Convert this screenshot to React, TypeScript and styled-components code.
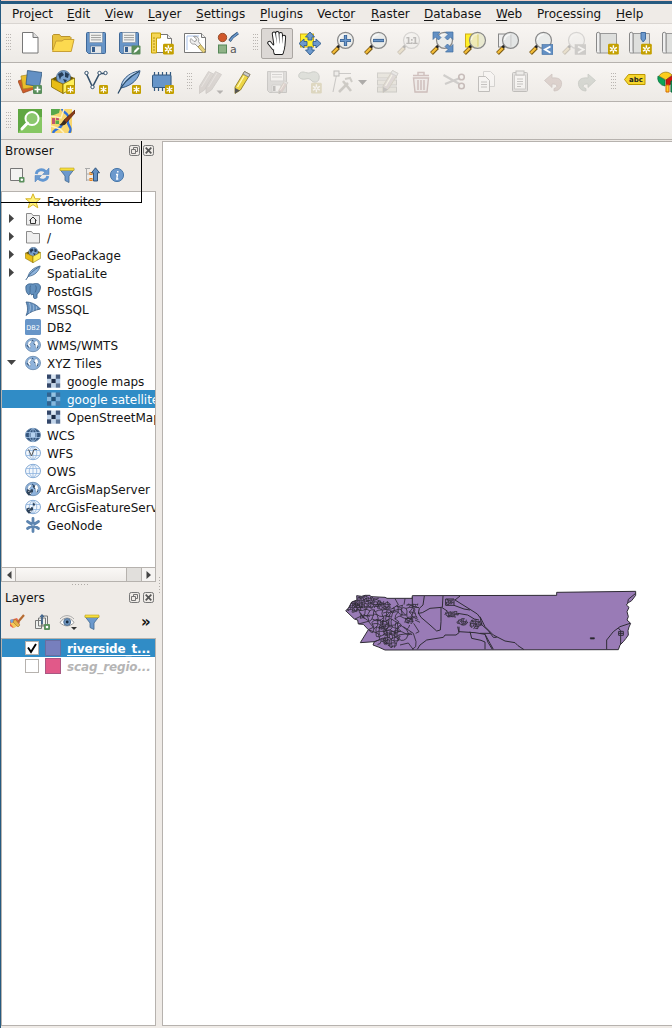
import React from "react";
import styled, { createGlobalStyle } from "styled-components";

const Global = createGlobalStyle`
  * { box-sizing: border-box; }
  body { margin: 0; overflow: hidden; background: #efebe7; }
  svg { display: block; flex: none; }
`;

const Window = styled.div`
  position: relative;
  display: flex;
  flex-direction: column;
  width: 672px;
  height: 1028px;
  overflow: hidden;
  border-left: 1px solid #265a80;
  background: #efebe7;
  color: #141414;
  font: 12px/18px "DejaVu Sans", sans-serif;
`;

const WindowEdge = styled.div`
  flex: none;
  height: 4px;
  border-top: 1px solid #f3cfc5;
  background: #265a80;
`;

const MenuBar = styled.nav`
  display: flex;
  flex: none;
  height: 20px;
  padding-left: 11px;
  border-bottom: 1px solid #d9d5d1;
`;

const MenuItem = styled.span<{ $w: number }>`
  flex: none;
  width: ${(p) => p.$w}px;
  line-height: 21px;
  white-space: nowrap;
  u { text-decoration-thickness: 1px; text-underline-offset: 2px; text-decoration-skip-ink: none; }
`;

const ToolBar = styled.div<{ $h: number }>`
  display: flex;
  flex: none;
  align-items: center;
  height: ${(p) => p.$h}px;
  border-bottom: 1px solid #b6b2ae;
  background: linear-gradient(#f8f5f2, #edeae6);
`;

const Grip = styled.span<{ $first?: boolean }>`
  flex: none;
  width: ${(p) => (p.$first ? 13 : 16)}px;
  height: 18px;
  padding-left: ${(p) => (p.$first ? 5 : 8)}px;
  &::before {
    content: "";
    display: block;
    width: 5px;
    height: 17px;
    background: radial-gradient(circle at 0.5px 0.5px, #b9b5b1 0.7px, transparent 0.8px) 0 0 / 2px 3px;
  }
`;

const Tool = styled.span<{ $on?: boolean; $off?: boolean; $w?: number }>`
  display: flex;
  flex: none;
  align-items: center;
  gap: 3px;
  width: ${(p) => p.$w ?? 33}px;
  height: 31px;
  padding-left: 4px;
  & > svg { opacity: ${(p) => (p.$off ? 0.28 : 1)}; filter: ${(p) => (p.$off ? "saturate(.45)" : "none")}; }
  ${(p) =>
    p.$on &&
    `width: 32px; margin-right: 1px; border: 1px solid #aaa6a2; border-radius: 2px; background: #dcd8d5; padding-left: 3px;`}
`;

const Body = styled.div`
  display: flex;
  flex: 1;
  min-height: 0;
`;

const Docks = styled.aside`
  display: flex;
  flex: none;
  flex-direction: column;
  width: 155px;
  padding-bottom: 2px;
`;

const DockTitle = styled.div`
  display: flex;
  flex: none;
  align-items: center;
  gap: 3px;
  height: 21px;
  padding: 0 2px 0 4px;
  span { flex: 1; }
`;

const DockTools = styled.div`
  display: flex;
  flex: none;
  align-items: center;
  gap: 9px;
  height: 30px;
  padding: 0 0 2px 8px;
`;

const More = styled.b`
  margin-left: 32px;
  font-size: 15px;
  line-height: 14px;
`;

const TreeBox = styled.div<{ $h?: number }>`
  display: flex;
  flex: ${(p) => (p.$h ? "none" : "1")};
  flex-direction: column;
  height: ${(p) => (p.$h ? `${p.$h}px` : "auto")};
  border: 1px solid #b6b2ae;
  background: #fff;
  overflow: hidden;
`;

const TreeRow = styled.div<{ $sel?: boolean; $child?: boolean }>`
  display: flex;
  flex: none;
  align-items: center;
  height: 18px;
  padding-left: ${(p) => (p.$child ? 25 : 3)}px;
  background: ${(p) => (p.$sel ? "#308cc6" : "transparent")};
  color: ${(p) => (p.$sel ? "#fff" : "inherit")};
  white-space: nowrap;
  & > span { flex: none; margin: 2px 0 0 6px; }
`;

const Twisty = styled.i`
  flex: none;
  width: 20px;
  height: 18px;
  svg { margin-top: 4px; }
`;

const ScrollBar = styled.div`
  display: flex;
  height: 14px;
  margin-top: auto;
  border-top: 1px solid #b6b2ae;
  background: #e1dfdc;
`;

const ScrollEnd = styled.span<{ $right?: boolean }>`
  display: flex;
  align-items: center;
  justify-content: center;
  width: 14px;
  margin-left: ${(p) => (p.$right ? "auto" : "0")};
  border: solid #b6b2ae;
  border-width: ${(p) => (p.$right ? "0 0 0 1px" : "0 1px 0 0")};
  background: #f6f4f2;
`;

const ScrollThumb = styled.span`
  width: 111px;
  border-right: 1px solid #b6b2ae;
  background: linear-gradient(#faf8f6, #efece9);
`;

const Splitter = styled.div`
  flex: none;
  height: 5px;
  padding: 2px 0 0 71px;
  &::before {
    content: "";
    display: block;
    width: 17px;
    height: 1px;
    background: repeating-linear-gradient(90deg, #b0aca8 0 1px, transparent 1px 3px);
  }
`;

const VSplitter = styled.div`
  flex: none;
  width: 6px;
  padding: 437px 0 0 3px;
  &::before {
    content: "";
    display: block;
    width: 1px;
    height: 17px;
    background: repeating-linear-gradient(#b0aca8 0 1px, transparent 1px 3px);
  }
`;

const LayerRow = styled.div<{ $sel?: boolean }>`
  display: flex;
  flex: none;
  align-items: center;
  height: 18px;
  padding-left: 23px;
  background: ${(p) => (p.$sel ? "#308cc6" : "transparent")};
  color: ${(p) => (p.$sel ? "#fff" : "#b5b5b5")};
  font-weight: bold;
  font-style: ${(p) => (p.$sel ? "normal" : "italic")};
  letter-spacing: -0.15px;
  white-space: nowrap;
  span {
    margin-top: 2px;
    text-decoration: ${(p) => (p.$sel ? "underline" : "none")};
    text-underline-offset: 2px;
    text-decoration-thickness: 1px;
    text-decoration-skip-ink: none;
  }
`;

const Check = styled.i`
  flex: none;
  width: 14px;
  height: 14px;
  border: 1px solid #b6b2ae;
  background: #fff;
`;

const Swatch = styled.i<{ $c: string }>`
  flex: none;
  width: 16px;
  height: 16px;
  margin: 0 6px;
  border: 1px solid #55557766;
  background: ${(p) => p.$c};
`;

const Canvas = styled.main`
  flex: 1;
  min-width: 0;
  margin: 1px 0 2px;
  padding: 438px 0 0 172px;
  border: solid #b6b2ae;
  border-width: 1px 0 1px 1px;
  background: #fff;
`;

const OutlineMark = styled.div`
  position: absolute;
  left: 0;
  top: 141px;
  width: 141px;
  height: 62px;
  border: solid #000;
  border-width: 0 1px 1px 0;
`;

type Kids = { children: React.ReactNode };
const I24 = ({ children }: Kids) => (
  <svg width="24" height="24" viewBox="0 0 24 24" fill="none">{children}</svg>
);
const I16 = ({ children }: Kids) => (
  <svg width="16" height="16" viewBox="0 0 16 16" fill="none">{children}</svg>
);

const NewBadge = ({ big }: { big?: boolean }) => (
  <g transform={big ? "translate(13 12.8) scale(1.2)" : "translate(15 15)"}>
    <rect width="9" height="9" rx="1.2" fill="#c4a000" />
    <path d="M4.5 1.2v6.6M1.6 2.9l5.800 3.300M7.400 2.900L1.600 6.200" stroke="#fff" strokeWidth="1.200" />
    {big && <circle cx="4.500" cy="4.500" r="1" fill="#c4a000" stroke="#fff" strokeWidth=".7" />}
  </g>
);

const Floppy = () => (
  <>
    <path d="M3.5 1.5h17a1 1 0 0 1 1 1v19a1 1 0 0 1-1 1H4.500l-2-2v-18a1 1 0 0 1 1-1z" fill="#6795c8" stroke="#3f6898" />
    <rect x="5.500" y="1.500" width="13" height="10" fill="#f2f3f1" stroke="#8090a2" strokeWidth=".6" />
    <path d="M7 4.300h10M7 6.600h10M7 8.900h10" stroke="#9b9d9c" />
    <rect x="6.500" y="15" width="11" height="7.300" fill="#e5e7e8" stroke="#55779d" strokeWidth=".7" />
    <rect x="8" y="16" width="3" height="5" fill="#355d8c" />
  </>
);

const NewProject = () => (
  <I24><path d="M4.500 1.500h10.500l5 5v15.500H4.500z" fill="#fff" stroke="#777" /><path d="M15 1.500v5h5" fill="#ddd" stroke="#777" /></I24>
);
const OpenProject = () => (
  <I24>
    <path d="M1.500 19V4.500l1-1h6l1.500 2H19l1 1V10" fill="#e8c23f" stroke="#b9932e" />
    <path d="M1.500 20.500L5 10h6l2-1.500h10l-2.800 12z" fill="#fcd94f" stroke="#c9a034" />
  </I24>
);
const Save = () => <I24><Floppy /></I24>;
const SaveAs = () => (
  <I24><Floppy /><rect x="14.500" y="14.500" width="9" height="9" rx="1" fill="#5a8c5a" /><path d="M16.500 22l1-2.500 3.500-3.500 1.500 1.500-3.500 3.500z" fill="#fff" /></I24>
);
const NewLayout = () => (
  <I24>
    <path d="M2.500 3.500h15l4 4v14h-19z" fill="#fff" stroke="#777" /><path d="M17.500 3.500v4h4" stroke="#777" fill="#eee" />
    <path d="M1.500 2h9v5h-4v15h-5z" fill="#f5d657" stroke="#c4a000" /><path d="M3 7h2M3 10h2M3 13h2M3 16h2M3 19h2" stroke="#9c7e10" strokeWidth=".8" />
    <NewBadge big />
  </I24>
);
const LayoutManager = () => (
  <I24>
    <path d="M1.500 2.500h17l4 4v15h-21z" fill="#fff" stroke="#777" /><path d="M18.500 2.500v4h4" stroke="#777" fill="#eee" />
    <path d="M4 19V5h12" stroke="#a9c1ea" />
    <path d="M8 7.500l3 3 2-.5.500-2-3-2.500c4-1 6 2 5 5l2 3-2.500 2.500-3-3c-4 1-6-3-4-5.500z" fill="#eee" stroke="#888" strokeWidth=".8" />
    <path d="M15 16l2.500-2.500 5 6-2 2.500z" fill="#e6d27c" stroke="#9e8a45" strokeWidth=".8" />
  </I24>
);
const StyleManager = () => (
  <I24>
    <circle cx="6.500" cy="6.500" r="4.200" fill="#d1582b" stroke="#96502e" /><path d="M13.500 10l3-4L22 2" stroke="#34597f" strokeWidth="3" /><path d="M14 9.500l2.500-3L22 2" stroke="#6f9cd1" strokeWidth="1.400" />
    <rect x="2.500" y="14" width="8" height="8" fill="#8fb287" stroke="#568858" />
    <text x="14" y="21.500" fontSize="11" fontFamily="DejaVu Sans" fill="#555">a</text>
  </I24>
);

const PanHand = () => {
  const fingers = "M9 2.800L10.700 14M12.300 2.300L13.200 14M15.700 3.200L15.800 14M18.900 6L18.200 15M4.500 12L8.500 17";
  const palm = "M8.500 15l2-2h8l.200 4-1.500 5.500H10z";
  return (
    <I24>
      <g stroke="#1a1a1a" strokeWidth="4.400" strokeLinecap="round"><path d={fingers} /></g>
      <path d={palm} fill="#1a1a1a" stroke="#1a1a1a" strokeWidth="2.800" strokeLinejoin="round" />
      <g stroke="#fff" strokeWidth="2.500" strokeLinecap="round"><path d={fingers} /></g>
      <path d={palm} fill="#fff" stroke="#fff" strokeLinejoin="round" />
    </I24>
  );
};
const PanSelection = () => (
  <I24>
    <rect x="2.500" y="3" width="13" height="13" fill="#fff029" stroke="#d0ab17" />
    <path d="M12 1l4.500 5h-2.500v3h-4V6H7.500zM12 24l4.500-5h-2.500v-3h-4v3H7.500zM1 12.500L6 8v2.500h3v4H6V17zM23 12.500L18 8v2.500h-3v4h3V17z" fill="#6c99cd" stroke="#315d8d" strokeWidth=".9" />
  </I24>
);

const Lens = ({ tint = "#e9ebea", children }: { tint?: string; children?: React.ReactNode }) => (
  <>
    <path d="M1.500 22.500l6-6" stroke="#7c5a15" strokeWidth="4" /><path d="M1.800 22l5-5" stroke="#f4bd38" strokeWidth="2.400" />
    <path d="M6.500 16.500l2.500-2.500" stroke="#222" strokeWidth="2.800" />
    <circle cx="14.500" cy="9.300" r="8" fill={tint} fillOpacity=".9" stroke="#888" strokeWidth="1.200" />
    <path d="M8.500 9a6 6 0 0 1 6-5.500" stroke="#fff" strokeWidth="1.500" opacity=".7" />
    {children}
  </>
);
const ZoomIn = () => <I24><Lens><path d="M14.500 4v11M9 9.500h11" stroke="#38608f" strokeWidth="3.200" /><path d="M14.500 4.500v10M9.500 9.500h10" stroke="#6c99cd" strokeWidth="1.500" /></Lens></I24>;
const ZoomOut = () => <I24><Lens><path d="M9 9.500h11" stroke="#38608f" strokeWidth="3.200" /><path d="M9.500 9.500h10" stroke="#6c99cd" strokeWidth="1.500" /></Lens></I24>;
const ZoomNative = () => <I24><Lens><text x="8.200" y="13" fontSize="9" fontWeight="bold" fontFamily="DejaVu Sans" textLength="13" fill="#333">1:1</text></Lens></I24>;
const ZoomFull = () => (
  <I24><Lens /><path d="M3 1h7L8 3.500l3 3L8.500 9l-3-3L3 8.500zM23 1v7.500L20.500 6l-3 3L15 6.500l3-3L15.500 1zM23 21v-7.500L20.500 16l-3-3-2.500 2.500 3 3-2.500 2.500z" fill="#6390c4" stroke="#416d9f" strokeWidth=".7" /></I24>
);
const ZoomSelection = () => <I24><rect x="2.500" y="3" width="12" height="13" fill="#fff029" stroke="#d0ab17" /><Lens tint="#e8e8cd"><path d="M9.500 4.500L15 3v13l-6-3z" fill="#f3ebb0" opacity=".6" /><path d="M15 3.500v12" stroke="#d8ce6b" /></Lens></I24>;
const ZoomLayer = () => <I24><rect x="2.500" y="3" width="12" height="13" fill="#eee" stroke="#888" /><Lens tint="#e2e4e4"><path d="M15 3.500v12" stroke="#ccc" /></Lens></I24>;
const ZoomStep = ({ next }: { next?: boolean }) => (
  <I24><Lens /><rect x="13" y="13.500" width="11" height="10" fill={next ? "#777" : "#6390c4"} stroke={next ? "#777" : "#416d9f"} strokeWidth=".6" /><path d={next ? "M16 15.500l5.500 3-5.500 3.200" : "M21.500 15.500l-5.500 3 5.500 3.200"} stroke="#fff" strokeWidth="1.900" /></I24>
);
const MapView = ({ mark }: { mark?: boolean }) => (
  <I24>
    <path d="M5 2.500h16.500V22H5z" fill="#dedfdd" stroke="#999" /><path d="M5 22H3.500a1.500 1.500 0 0 1-2-1.500V3a1.500 1.500 0 0 1 3.500 0v16c0 2 1 3 0 3z" fill="#efefef" stroke="#888" />
    {mark && <path d="M13 1.500h4.500V8l-2.300 3L13 8z" fill="#6c99cd" stroke="#416d9f" />}
    <NewBadge big />
  </I24>
);

const DataSource = () => (
  <I24>
    <path d="M0 11l11-4 5 12-11 4z" fill="#ce5c2b" stroke="#964519" strokeWidth=".7" /><path d="M3 6l12-2 2 13-12 2z" fill="#e9bd2c" stroke="#a8861c" strokeWidth=".7" /><path d="M9.500.500l14.500 2-2.500 14-13.500-2z" fill="#6390c4" stroke="#34597f" strokeWidth=".8" />
    <rect x="15" y="15" width="9" height="9" rx="1.200" fill="#5a8f5c" /><path d="M19.500 16.500v6M16.500 19.500h6" stroke="#fff" strokeWidth="1.600" />
  </I24>
);
const Box3d = () => (
  <>
    <path d="M.500 9L12 13.500 23.500 8 12 3z" fill="#6b5600" /><circle cx="12.500" cy="7.500" r="7" fill="#7aa2ce" stroke="#3d5c80" strokeWidth=".7" />
    <path d="M7 4l4-2 2 3-3 2-1 3zM14 2l4 2-1 4-3-1zM12 9l4 1-2 3z" fill="#253c58" />
    <path d="M.500 9l11.500 5v9.500L.500 17z" fill="#e9bd17" stroke="#806700" strokeWidth=".8" /><path d="M23.500 8L12 14v9.500L23.500 17z" fill="#fff05b" stroke="#806700" strokeWidth=".8" />
  </>
);
const NewGeoPackage = () => <I24><Box3d /><NewBadge /></I24>;
const NewShape = () => <I24><path d="M2.500 4l6 13 7-13.500h6" stroke="#34506b" strokeWidth="1.600" /><g fill="#fff" stroke="#34506b"><circle cx="2.500" cy="3" r="1.700" /><circle cx="8.500" cy="17" r="1.700" /><circle cx="15.500" cy="3" r="1.700" /><circle cx="21.500" cy="3" r="1.700" /></g><NewBadge /></I24>;
const NewSpatialite = () => (
  <I24>
    <path d="M4 18C4 11 10 3 23 .700 22 8 16 15.500 4 18z" fill="#7da6d4" stroke="#365b85" />
    <path d="M6 14C9 7 14 4 21 2" stroke="#c6daee" strokeWidth="1.300" />
    <path d="M1 23.500C5 14 11 7.500 22 1.500" stroke="#274866" strokeWidth="1.200" />
    <NewBadge />
  </I24>
);
const NewMemory = () => (
  <I24><path d="M5 2v19M9 2v19M13 2v19M17 2v19M21 2v12" transform="translate(-.5 0)" stroke="#34597f" strokeWidth="1.200" /><rect x="2.500" y="5" width="18.500" height="12.500" rx="1" fill="#6795c8" stroke="#34597f" /><NewBadge /></I24>
);
const PencilShape = ({ fill = "#edd545" }: { fill?: string }) => (
  <>
    <path d="M3 17L12.500 1.500l5.500 3L8.500 20 3 23.500z" fill={fill} stroke="#8d7c2c" strokeWidth=".9" />
    <path d="M12.500 1.500l5.500 3-1.500 2.500-5.500-3z" fill="#ccc" stroke="#777" strokeWidth=".8" />
    <path d="M5.500 17L12 6" stroke="#fff9b5" strokeWidth="1.300" />
    <path d="M3 18l5 2.500L3 23.500z" fill="#555" />
  </>
);
const GreyPencil = () => (
  <><path d="M3 17L12.500 1.500l6 3L8.500 20 3 23.500z" fill="#a68f86" stroke="#80706a" strokeWidth=".9" /><path d="M5.500 17L14 3" stroke="#cdbfb9" /></>
);
const CurrentEdits = () => <I24><g transform="translate(-3 0)"><GreyPencil /></g><g transform="translate(4 0)"><GreyPencil /></g><path d="M17.500 20.500h7l-3.500 3.500z" fill="#222" /></I24>;
const ToggleEdit = () => <I24><PencilShape /></I24>;
const SaveEdits = () => (
  <I24><path d="M2.500 1.500h19v21h-17l-2-2z" fill="#aaa" stroke="#666" /><path d="M5.500 2h13v9h-13zM7 15h9v7H7z" fill="#f4f4f4" stroke="#888" /><path d="M7 4.500h10M7 7h10" stroke="#888" /><path d="M8 16h2.500v5H8z" fill="#444" /><g transform="translate(12 10) scale(.6)"><PencilShape fill="#c77" /></g></I24>
);
const AddPolygon = () => <I24><path d="M2 3c4-3 7 2 12-1 5-1 8 2 7 7-1 4-6 4-8 1-3-3-5 0-9-1C0 8 0 5 2 3z" fill="#9bb8a0" stroke="#56705c" /><NewBadge big /></I24>;
const VertexTool = () => <I24><path d="M2 22L5.500 5M6 3.500h14" stroke="#666" strokeWidth="1.100" /><rect x="3" y="1" width="5" height="5" fill="#ddd" stroke="#333" /><path d="M8 22l9-9M12 11l8 10" stroke="#75705c" strokeWidth="2.600" /><path d="M14 9l5-1 2 4" stroke="#75705c" strokeWidth="2" /></I24>;
const ModifyAttrs = () => <I24><g fill="#d0c9a5" stroke="#776"><rect x="1.500" y="3" width="19" height="5" /><rect x="1.500" y="10" width="19" height="5" /><rect x="1.500" y="17" width="19" height="5" /></g><g transform="translate(4 -1)"><PencilShape fill="#b99" /></g></I24>;
const Trash = () => <I24><path d="M4.500 8h15l-1.500 14H6z" fill="#edd" stroke="#a03a3a" strokeWidth="1.400" /><path d="M4 5.500h16M9 5V2.500h6V5M9 10v10M12 10v10M15 10v10" stroke="#a03a3a" strokeWidth="1.500" /></I24>;
const Cut = () => <I24><path d="M1.500 5l16 9M3 14l15-6" stroke="#777" strokeWidth="2.200" /><circle cx="19.500" cy="7" r="2.800" stroke="#733" strokeWidth="1.600" /><circle cx="19.500" cy="16" r="2.800" stroke="#733" strokeWidth="1.600" /></I24>;
const Copy = () => <I24><path d="M8.500 1.500h7l4 4v11h-11z" fill="#fff" stroke="#888" /><path d="M3.500 6.500h7l4 4v11h-11z" fill="#fff" stroke="#444" /><path d="M6 12h6M6 14.500h6M6 17h6" stroke="#555" /></I24>;
const Paste = () => <I24><rect x="4.500" y="2.500" width="15" height="19" rx="1" fill="#bbb" stroke="#444" /><path d="M6.500 5h11v14h-11z" fill="#fff" stroke="#777" /><rect x="8" y="1" width="8" height="4" fill="#ddd" stroke="#444" /><path d="M9 9h6M9 11.500h6M9 14h6M9 16.500h4" stroke="#555" /></I24>;
const Undo = () => <I24><path d="M3.500 10.500L11 4v4c8-1 11 3 9 8.500-1 3-4 4.500-7 4.500v-2.500c4-1 4-5-2-4.500v3.500z" fill="#c2806f" stroke="#8c5144" strokeWidth=".8" /></I24>;
const Redo = () => <I24><path d="M21.500 10.500L14 4v4C6 7 3 11 5 16.500c1 3 4 4.500 7 4.500v-2.500c-4-1-4-5 2-4.500v3.500z" fill="#819d86" stroke="#526e57" strokeWidth=".8" /></I24>;
const LabelTool = () => <I24><path d="M1.500 9.500l4-5h16.500v10H5.500z" fill="#f5d62e" stroke="#bd9700" /><text x="6" y="12" fontSize="7" fontWeight="bold" fontFamily="DejaVu Sans" textLength="14" fill="#222">abc</text></I24>;
const DiagramTool = () => <I24><path d="M10 10L3 6a8 8 0 0 1 13-1z" fill="#fcce1d" stroke="#866600" strokeWidth=".6" /><path d="M9 10L2 6a8 8 0 0 0 7 10z" fill="#0ba458" stroke="#075f32" strokeWidth=".6" /><path d="M10 10l7-5a8 8 0 0 1-7 11z" fill="#cc1610" stroke="#711" strokeWidth=".6" /><path d="M10 15h3v7h-3z" fill="#ffd02a" stroke="#d66a00" /><path d="M15 11h4v11h-4z" fill="#1cab65" stroke="#075f32" /></I24>;

const SearchPlugin = () => (
  <I24><rect width="24" height="24" fill="#86c763" /><path d="M0 0h24v8C14 8 6 14 0 24z" fill="#4f9a35" opacity=".7" /><circle cx="14" cy="9.500" r="6.500" stroke="#fff" strokeWidth="2" fill="#8bc76f" /><path d="M9.500 14L4 19.800" stroke="#fff" strokeWidth="3" strokeLinecap="round" /></I24>
);
const StreetMapPlugin = () => (
  <I24>
    <rect width="21" height="24" fill="#f9d66e" /><path d="M0 0h9l-1 4-8 3z" fill="#58a84b" /><path d="M1 9h3v6H1zM5 8h3v3H5z" fill="#c4546e" /><path d="M4.500 11.500H8V15H4.500z" fill="#58a84b" />
    <path d="M11 0c1 4 8 4 6 11-2 5 6 8 1 13M2 24c2-6 8-3 9-9" stroke="#2f71dc" strokeWidth="2.400" /><path d="M0 17l9 3 4 4M13 0l-3 9-10-2" stroke="#fff1c0" strokeWidth="1.500" />
    <path d="M24 1L13 11l2.500 2.500L24 4z" fill="#8d3c16" stroke="#4f1f0b" strokeWidth=".7" /><path d="M13 11c-2 1.500-2 4-5 5 3 1 7 .5 7.500-2.500z" fill="#3b2a1c" />
  </I24>
);

/* ---- 16px icons ---- */
const AddLayer = () => <I16><path d="M1.500 1.500h12v12h-12z" fill="#f3f3f1" stroke="#777" /><rect x="10" y="10" width="5.500" height="5.500" rx="1" fill="#5a8f5c" /><circle cx="12.800" cy="12.800" r="1.300" fill="#fff" /></I16>;
const Refresh = () => (
  <I16>
    <path d="M2.200 7C3 2.500 8.500 1.500 11.500 4.500M13.800 9C13 13.500 7.500 14.500 4.500 11.500" stroke="#6297d2" strokeWidth="2.800" />
    <path d="M15 1v6.500H8.500zM1 15V8.500h6.500z" fill="#6c9bd1" stroke="#4a7fb8" strokeWidth=".5" />
  </I16>
);
const Filter = () => <I16><path d="M1 2.500h14L10 9v6.500l-4-2V9z" fill="#6c99cd" stroke="#41688f" strokeWidth=".8" /><path d="M1 1h14v2.500H1z" fill="#f6df3e" stroke="#bda31e" strokeWidth=".6" /></I16>;
const Collapse = () => <I16><path d="M1 1.500h5M2.500 1v13M2.500 7h3M2.500 13h3" stroke="#aaa" /><path d="M6 5.500h2v2H6zM6 11.500h2v2H6z" fill="#fff" stroke="#e48523" strokeWidth="1.200" /><path d="M11.500.800l4 5H13.500V14h-4V5.800h-2z" fill="#6390c4" stroke="#274a73" strokeWidth=".9" /></I16>;
const Info = () => <I16><circle cx="8" cy="8" r="6.600" fill="#6c99cd" stroke="#4a79aa" /><path d="M8.800 4v1.600M7 7.500h1.500L7.800 12h1.500" stroke="#fff" strokeWidth="1.400" /></I16>;
const Star = () => <I16><path d="M8 .800l2.100 5h5.200l-4.100 3.400 1.600 5.600L8 11.600l-4.800 3.200 1.600-5.600L.700 5.800h5.200z" fill="#fff27a" stroke="#d5b424" /></I16>;
const FolderBase = () => <path d="M1.500 14V2.500h5l1.500 2h6.500V14z" fill="#efefef" stroke="#8b8b8b" />;
const HomeFolder = () => <I16><FolderBase /><path d="M4.500 9.500L8 6l3.500 3.500M5.500 9v3.500h5V9" stroke="#333" /></I16>;
const Folder = () => <I16><FolderBase /></I16>;
const Gpkg = () => <I16><g transform="scale(.667)"><Box3d /></g></I16>;
const Feather = () => <I16><path d="M3 11.500C4 7 8 2.500 15.200 1 13.500 6.500 10 10.500 3 11.500z" fill="#8fb4dd" stroke="#44698f" strokeWidth=".8" /><path d="M.800 15C4 9.500 8.500 5 14.500 1.500" stroke="#44698f" /></I16>;
const Elephant = () => <I16><path d="M1 3C3 0 6 1 8 1c3-1 7-1 7.500 3 0 3-1.500 5-2.500 6.500l-1 .500v3.500c-1 2-3.500 1.500-3.500-.500V11L6.500 12 5 9.500 4 12C1 10 .500 6 1 3z" fill="#6390bd" stroke="#355d88" strokeWidth=".8" /><path d="M5.500 2.500c-1 3 0 4-.5 6.500M10.500 2.500c1.500 2 .5 5-.5 7" stroke="#3c638c" strokeWidth=".8" /></I16>;
const Mssql = () => <I16><path d="M1 1c5 0 10 2 14.500 7C10 9 5 11 1 14.500c2-4 2-9 0-13.500z" fill="#648fbd" stroke="#3b6088" strokeWidth=".8" /><path d="M4.500 2c1.500 4 1 7-.5 10M8 3.500c1 2.500 1 4.500 0 6.500M11.500 5.500v3" stroke="#b4cde6" strokeWidth=".7" /></I16>;
const Db2 = () => <I16><rect width="16" height="16" rx="1.500" fill="#6795c8" /><text x="1.300" y="10.500" fontSize="6.500" fontFamily="DejaVu Sans" textLength="13.500" fill="#fff">DB2</text></I16>;
const Globe = ({ kind }: { kind: "land" | "grid" | "dark" | "wfs" | "arc" | "arcf" }) => {
  const pale = kind === "grid" || kind === "wfs" || kind === "arcf";
  const arc = kind === "arc" || kind === "arcf";
  return (
    <I16>
      <ellipse cx="8" cy="8" rx="7.500" ry="6.700" fill={kind === "dark" ? "#34557c" : pale ? "#f2f7fc" : "#8fb3dc"} stroke={pale ? "#7aa3d0" : "#6c8db2"} strokeWidth=".9" />
      {(pale || kind === "dark") && <path d="M1 5.500h14M1 10.500h14M8 1.500v13M8 1.500C3 4 3 12 8 14.500M8 1.500c5 2.500 5 10.500 0 13" stroke={pale ? "#8fb4de" : "#a7c7ea"} strokeWidth=".8" />}
      {kind === "dark" && <path d="M5.500 6h5v4h-5z" fill="#b6d2ef" />}
      {(kind === "land" || kind === "arc") && (
        <>
          <path d="M3 5.500l2-2 2 .5-1 2-1.500 1.500L6 9l-1 2.500-1-1.500L2.500 8z" fill="#fff" stroke="#5d7ea3" strokeWidth=".5" />
          <path d="M9.500 4.500l2-1 1.500 2 .5 2-1 1-.5 3.500-1.500-1-.2-3-1.300-1.500z" fill="#fff" stroke="#5d7ea3" strokeWidth=".5" />
          <path d="M7 3l1.500 1M2 8l1.500 2.500M9 6.500l1 1.500M12 11l1-1.500" stroke="#2f4c6d" />
        </>
      )}
      {kind === "wfs" && <path d="M3.500 4.500l3 6.500 2.500-6.500h3" stroke="#555" />}
      {arc && <path d="M1.500 9.500l2.500-1 1.500 1 1-1.500 1.500.5V11l-1.500 1-1 2-2 .5-2-2.500zM7.500 5l1.500-1.500 1 2-1 2z" fill="#2d425a" />}
      {arc && <path d="M3.500 10.500l1-.5M5 13l1-1.500" stroke="#fff" />}
    </I16>
  );
};
const Tiles = ({ sel }: { sel?: boolean }) => {
  const colors = ["#33476a", "#dbe7f4", "#465b7d", "#c3d6ec", "#1c2b45", "#a9c4e4", "#33476a", "#c3d6ec", "#5a7396"];
  return (
    <svg width="14" height="14" viewBox="0 0 14 14" opacity={sel ? 0.6 : 1}>
      {colors.map((c, i) => <rect key={i} x={(i % 3) * 4.4} y={0.5 + Math.floor(i / 3) * 4.4} width="4.4" height="4.4" fill={c} />)}
    </svg>
  );
};
const GeoNode = () => <I16><path d="M8 1.500v13M2.500 4.500l11 7M13.500 4.500l-11 7" stroke="#5d85b0" strokeWidth="2.800" strokeLinecap="round" /><circle cx="8" cy="8" r="1" fill="#9dbbdb" /></I16>;
const StylePanel = () => <I16><path d="M1 6l7-2 3 5-7 5-3-2z" fill="#e7664e" /><path d="M1 9l5-1 4 3-5 3z" fill="#f5c95b" /><path d="M1 6l3-1 1 3-3 1z" fill="#72a6dc" /><path d="M6 5l5 6-2 2-5-5z" fill="#e6b24a" stroke="#93691b" strokeWidth=".5" /><path d="M9 8l6-7" stroke="#b66b31" strokeWidth="2.200" /></I16>;
const AddGroup = () => <I16><path d="M1.500 6.500h6v8h-6zM4.500 4h7v8h-7zM8 2h5.500v9H8z" fill="#eef0ee" stroke="#777" /><path d="M8 1v9" stroke="#355d88" strokeWidth="1.500" /><path d="M6 3l2-2.500L10 3" stroke="#355d88" /><rect x="10" y="10" width="6" height="6" rx="1" fill="#5a8f5c" /><circle cx="13" cy="13" r="1.300" fill="#fff" /></I16>;
const Eye = () => <svg width="16" height="16" viewBox="0 0 16 16" fill="none" overflow="visible"><path d="M1 8.500c4-6 10-6 14 0-4 4.500-10 4.500-14 0z" fill="#fff" stroke="#999" /><path d="M1 5c4-4.500 10-4.500 14 0" stroke="#aaa" /><circle cx="8.200" cy="8" r="3.500" fill="#6d93bc" stroke="#43658b" strokeWidth=".8" /><circle cx="8.200" cy="8" r="1.400" fill="#1b2c40" /><path d="M12 13h6l-3 3z" fill="#333" /></svg>;

const FloatButton = () => <svg width="11" height="11" viewBox="0 0 11 11" fill="none"><rect x=".500" y=".500" width="10" height="10" rx="1.800" stroke="#777" /><path d="M4.500 4V2.500h4v4H7M2.500 4.500h4v4h-4z" stroke="#666" strokeWidth=".9" /></svg>;
const CloseButton = () => <svg width="11" height="11" viewBox="0 0 11 11" fill="none"><rect x=".500" y=".500" width="10" height="10" rx="1.800" stroke="#777" /><path d="M2.700 2.700l5.600 5.600M8.300 2.700L2.700 8.300" stroke="#555" strokeWidth="1.700" /></svg>;

const menus: [string, string, string, number][] = [
  ["Pro", "j", "ect", 55], ["", "E", "dit", 38], ["", "V", "iew", 43], ["", "L", "ayer", 48],
  ["", "S", "ettings", 64], ["", "P", "lugins", 57], ["Vect", "o", "r", 54], ["", "R", "aster", 53],
  ["", "D", "atabase", 72], ["", "W", "eb", 41], ["Pro", "c", "essing", 79], ["", "H", "elp", 50],
];

type Node = { label: string; icon: React.ReactNode; arrow?: "right" | "down"; child?: boolean; sel?: boolean };
const tree: Node[] = [
  { label: "Favorites", icon: <Star /> },
  { label: "Home", icon: <HomeFolder />, arrow: "right" },
  { label: "/", icon: <Folder />, arrow: "right" },
  { label: "GeoPackage", icon: <Gpkg />, arrow: "right" },
  { label: "SpatiaLite", icon: <Feather />, arrow: "right" },
  { label: "PostGIS", icon: <Elephant /> },
  { label: "MSSQL", icon: <Mssql /> },
  { label: "DB2", icon: <Db2 /> },
  { label: "WMS/WMTS", icon: <Globe kind="land" /> },
  { label: "XYZ Tiles", icon: <Globe kind="land" />, arrow: "down" },
  { label: "google maps", icon: <Tiles />, child: true },
  { label: "google satellite", icon: <Tiles sel />, child: true, sel: true },
  { label: "OpenStreetMap", icon: <Tiles />, child: true },
  { label: "WCS", icon: <Globe kind="dark" /> },
  { label: "WFS", icon: <Globe kind="wfs" /> },
  { label: "OWS", icon: <Globe kind="grid" /> },
  { label: "ArcGisMapServer", icon: <Globe kind="arc" /> },
  { label: "ArcGisFeatureServer", icon: <Globe kind="arcf" /> },
  { label: "GeoNode", icon: <GeoNode /> },
];

/* Census tract boundaries: a jittered mesh inside each elliptical cluster [cx, cy, rx, ry, cell]. */
const clusters: [number, number, number, number, number][] = [
  [95, 68, 46, 19, 5.8], [56, 82, 26, 15, 5.6], [146, 76, 24, 14, 6], [118, 104, 56, 24, 13],
  [155, 142, 52, 32, 11], [150, 138, 18, 20, 7], [170, 178, 28, 26, 7.5], [222, 121, 17, 11, 5],
  [200, 100, 56, 28, 14], [232, 75, 20, 8, 6], [343, 66, 14, 10, 5.5], [350, 102, 21, 11, 5.2],
  [383, 126, 17, 11, 5.2], [420, 133, 21, 14, 5.2], [205, 150, 34, 30, 20], [135, 182, 26, 20, 13],
];
function tractMesh() {
  let seed = 77;
  const rnd = () => (seed = (seed * 16807) % 2147483647) / 2147483647;
  let d = "";
  for (const [cx, cy, rx, ry, s] of clusters) {
    const cols = Math.ceil((2 * rx) / s) + 1;
    const rows = Math.ceil((2 * ry) / s) + 1;
    const pts = Array.from({ length: rows }, (_, r) =>
      Array.from({ length: cols }, (_, c) => [
        cx - rx + c * s + (rnd() - 0.5) * s * 0.9,
        cy - ry + r * s + (rnd() - 0.5) * s * 0.9,
      ])
    );
    const inside = ([x, y]: number[]) => ((x - cx) / rx) ** 2 + ((y - cy) / ry) ** 2 <= 1.1;
    const link = (a: number[], b?: number[]) => {
      if (!b || !inside(a) || !inside(b) || rnd() > 0.9) return;
      const mx = (a[0] + b[0]) / 2 + (rnd() - 0.5) * s * 0.4;
      const my = (a[1] + b[1]) / 2 + (rnd() - 0.5) * s * 0.4;
      d += `M${a[0].toFixed(1)} ${a[1].toFixed(1)}L${mx.toFixed(1)} ${my.toFixed(1)} ${b[0].toFixed(1)} ${b[1].toFixed(1)}`;
    };
    for (let r = 0; r < rows; r++)
      for (let c = 0; c < cols; c++) {
        link(pts[r][c], pts[r][c + 1]);
        link(pts[r][c], pts[r + 1]?.[c]);
      }
  }
  return d;
}
const tracts = tractMesh();
const county =
  "M65 47L80 49 90 46 105 46 108 50 150 52 156 55 231 55 232 47 665 46 665 37 902 34 902 46 890 62 880 68 874 75 882 82 876 95 880 110 876 120 887 130 882 141 879 152 880 165 873 175 865 185 855 195 850 209 150 210 130 201 114 195 118 185 76 188 100 149 85 133 70 132 68 120 58 117 32 92 40 85 50 66 66 60z";

const CountyMap = () => (
  <svg width="310" height="80" viewBox="0 0 930 240" fill="none" stroke="#2f2c35" strokeWidth="3" strokeLinejoin="round">
    <clipPath id="county"><path d={county} /></clipPath>
    <path d={county} fill="#997bb6" />
    <g clipPath="url(#county)">
      <path d={tracts} strokeWidth="2.500" />
      <path d="M232 50v30l20 3M268 48l-4 27-11 10-3 15 12-2 23-13 35-3M324 48l-2 34M318 82v43l-2 25-11 3-20-18-27-23-8-13M375 48l-15 12 45 28 22 14 9 12 4 20 20 18 15 20h10M332 57h25v19h-25zM357 76l30 11 18 3M320 82l18 12M368 100l30 5 20 12 14 3M247 208l8-13 20-15 50-8 5-7h33l9-7-4-18M372 140v15l48 3M405 155l5 20 28 6 12 5v22M420 158l30 5 9 24 13 21" />
      <path d="M435 110l15 30 25 25 35 18 30 5 9 9 18 12M435 160h30M450 163l15 27 10 18" />
      <path d="M815 208v-28l20-25 20-15 30-10M850 144l7 8v42M851 154h14v12h-14zM851 160h14M902 40l-22 18-2 12" />
      <path d="M766 173h12v4h-12z" fill="#29272d" strokeWidth="2" />
      <path d="M70 132l30-8 15 18-15 7 30 12 5 18-18 6M118 186l25-12 15 18M180 56l10 18-18 12M210 56l-3 18M165 95l30-8 18 20M238 84l-8 25 20 10M240 120l15 7M236 130l16 25-10 5M205 140l30 20 8 25-1 15-10 8M190 165l40-6M195 195l25-6 15 20M60 117l25-12 20 4M76 98l10 16" strokeWidth="2.600" />
    </g>
  </svg>
);

export default function App() {
  return (
    <Window>
      <Global />
      <WindowEdge />
      <MenuBar>
        {menus.map(([a, b, c, w]) => <MenuItem key={a + b + c} $w={w}>{a}<u>{b}</u>{c}</MenuItem>)}
      </MenuBar>
      <ToolBar $h={39}>
        <Grip $first />
        {[NewProject, OpenProject, Save, SaveAs, NewLayout, LayoutManager, StyleManager].map((C, i) => <Tool key={i}><C /></Tool>)}
        <Grip />
        <Tool $on><PanHand /></Tool>
        <Tool><PanSelection /></Tool>
        <Tool><ZoomIn /></Tool>
        <Tool><ZoomOut /></Tool>
        <Tool $off><ZoomNative /></Tool>
        <Tool><ZoomFull /></Tool>
        <Tool><ZoomSelection /></Tool>
        <Tool><ZoomLayer /></Tool>
        <Tool><ZoomStep /></Tool>
        <Tool $off><ZoomStep next /></Tool>
        <Tool><MapView /></Tool>
        <Tool><MapView mark /></Tool>
        <Tool><MapView /></Tool>
      </ToolBar>
      <ToolBar $h={39}>
        <Grip $first />
        {[DataSource, NewGeoPackage, NewShape, NewSpatialite, NewMemory].map((C, i) => <Tool key={i}><C /></Tool>)}
        <Grip />
        <Tool $off><CurrentEdits /></Tool>
        <Tool><ToggleEdit /></Tool>
        <Tool $off><SaveEdits /></Tool>
        <Tool $off><AddPolygon /></Tool>
        <Tool $off $w={45}>
          <VertexTool />
          <svg width="9" height="5" viewBox="0 0 9 5"><path d="M0 0h9L4.500 5z" fill="#000" /></svg>
        </Tool>
        {[ModifyAttrs, Trash, Cut, Copy, Paste, Undo, Redo].map((C, i) => <Tool key={i} $off><C /></Tool>)}
        <Grip />
        <Tool><LabelTool /></Tool>
        <Tool><DiagramTool /></Tool>
      </ToolBar>
      <ToolBar $h={38}>
        <Grip $first />
        <Tool><SearchPlugin /></Tool>
        <Tool><StreetMapPlugin /></Tool>
      </ToolBar>
      <Body>
        <Docks>
          <DockTitle><span>Browser</span><FloatButton /><CloseButton /></DockTitle>
          <DockTools><AddLayer /><Refresh /><Filter /><Collapse /><Info /></DockTools>
          <TreeBox $h={391}>
            {tree.map((n) => (
              <TreeRow key={n.label} $sel={n.sel} $child={n.child}>
                <Twisty>
                  {n.arrow && <svg width="12" height="10" viewBox="0 0 12 10"><path d={n.arrow === "right" ? "M4 0l5 4.500L4 9z" : "M2 2h9L6.500 7z"} fill="#444" /></svg>}
                </Twisty>
                {n.icon}
                <span>{n.label}</span>
              </TreeRow>
            ))}
            <ScrollBar>
              <ScrollEnd><svg width="6" height="8" viewBox="0 0 6 8"><path d="M5.500 0v8L1 4z" fill="#444" /></svg></ScrollEnd>
              <ScrollThumb />
              <ScrollEnd $right><svg width="6" height="8" viewBox="0 0 6 8"><path d="M.500 0v8L5 4z" fill="#444" /></svg></ScrollEnd>
            </ScrollBar>
          </TreeBox>
          <Splitter />
          <DockTitle><span>Layers</span><FloatButton /><CloseButton /></DockTitle>
          <DockTools><StylePanel /><AddGroup /><Eye /><Filter /><More>»</More></DockTools>
          <TreeBox>
            <LayerRow $sel>
              <Check><svg width="12" height="12" viewBox="0 0 12 12" fill="none"><path d="M2 5.500L5 10l5-8" stroke="#000" strokeWidth="1.900" /></svg></Check>
              <Swatch $c="#777fbd" /><span>riverside_t...</span>
            </LayerRow>
            <LayerRow>
              <Check /><Swatch $c="#e15989" /><span>scag_regio...</span>
            </LayerRow>
          </TreeBox>
        </Docks>
        <VSplitter />
        <Canvas><CountyMap /></Canvas>
      </Body>
      <OutlineMark />
    </Window>
  );
}
